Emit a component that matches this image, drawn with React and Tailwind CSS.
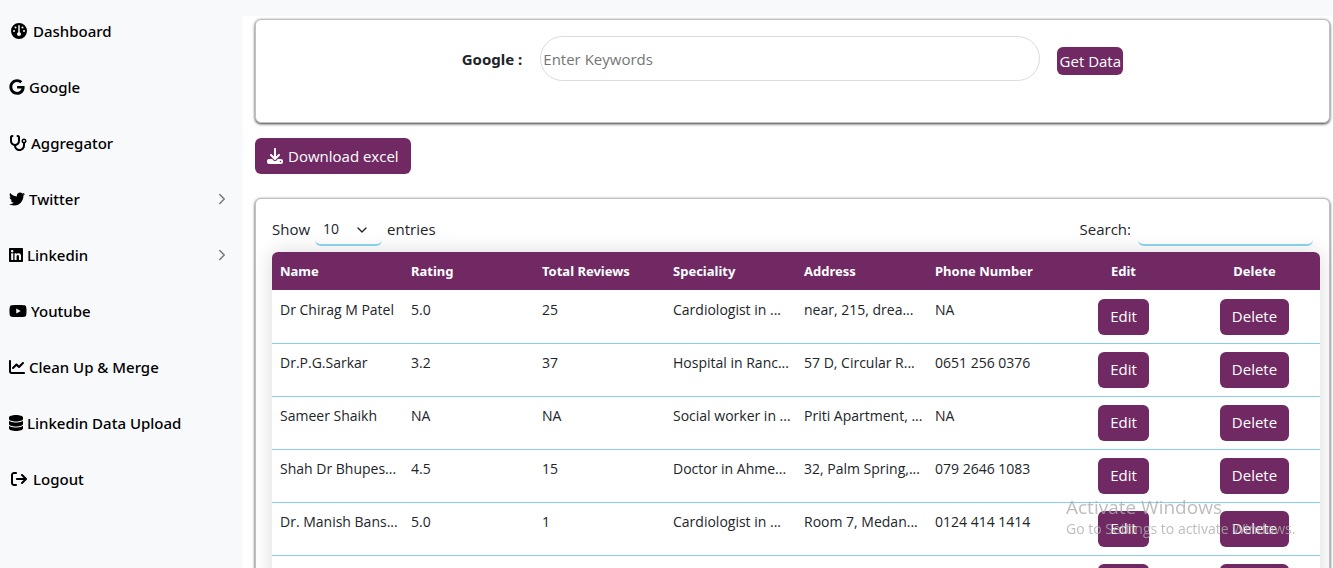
import {
  FaArrowRightFromBracket,
  FaChartLine,
  FaDatabase,
  FaDownload,
  FaGauge,
  FaGoogle,
  FaStethoscope,
  FaTwitter,
  FaYoutube,
} from "react-icons/fa6";
import { FaLinkedin } from "react-icons/fa";
import { ChevronDown, ChevronRight } from "lucide-react";

const links = [
  { label: "Dashboard", icon: FaGauge, size: "size-4", inset: true },
  { label: "Google", icon: FaGoogle, size: "size-4" },
  { label: "Aggregator", icon: FaStethoscope, size: "h-4 w-[18px]" },
  { label: "Twitter", icon: FaTwitter, size: "size-4" },
  { label: "Linkedin", icon: FaLinkedin, size: "h-4 w-[14px]" },
  { label: "Youtube", icon: FaYoutube, size: "h-4 w-[18px]" },
  { label: "Clean Up & Merge", icon: FaChartLine, size: "size-4" },
  { label: "Linkedin Data Upload", icon: FaDatabase, size: "h-4 w-[14px]" },
  { label: "Logout", icon: FaArrowRightFromBracket, size: "size-4", inset: true },
];
const expandable = ["Twitter", "Linkedin"];

const columns = ["Name", "Rating", "Total Reviews", "Speciality", "Address", "Phone Number"];
const rows = [
  ["Dr Chirag M Patel", "5.0", "25", "Cardiologist in ...", "near, 215, drea...", "NA"],
  ["Dr.P.G.Sarkar", "3.2", "37", "Hospital in Ranc...", "57 D, Circular R...", "0651 256 0376"],
  ["Sameer Shaikh", "NA", "NA", "Social worker in ...", "Priti Apartment, ...", "NA"],
  ["Shah Dr Bhupes...", "4.5", "15", "Doctor in Ahme...", "32, Palm Spring,...", "079 2646 1083"],
  ["Dr. Manish Bans...", "5.0", "1", "Cardiologist in ...", "Room 7, Medan...", "0124 414 1414"],
  ["", "", "", "", "", ""],
];

const card =
  "rounded-md border border-[#c0c0c0] bg-white shadow-[0_1px_3px_rgba(0,0,0,0.8)]";
const button = "h-9 rounded-md bg-[#702963] px-3 text-white";

function Sidebar() {
  return (
    <nav className="w-[243px] shrink-0 bg-[#f8f9fb] pt-[3px] font-['Noto_Sans',sans-serif] font-medium text-black">
      <ul>
        {links.map(({ label, icon: Icon, size, inset }) => (
          <li key={label}>
            <a
              href="#"
              className={
                inset
                  ? "flex h-14 items-center gap-1.5 pr-3 pl-[11px]"
                  : "flex h-14 items-center gap-1 pr-3 pl-[9px]"
              }
            >
              <Icon className={size} />
              <span>{label}</span>
              {expandable.includes(label) && (
                <ChevronRight className="ml-auto size-[18px] text-[#777]" />
              )}
            </a>
          </li>
        ))}
      </ul>
    </nav>
  );
}

function SearchPanel() {
  return (
    <form className={`flex h-[104px] items-start justify-center pt-4 ${card}`}>
      <label
        htmlFor="keywords"
        className="mt-3 mr-[18px] font-['Noto_Sans',sans-serif] font-bold text-[#212529]"
      >
        Google :
      </label>
      <input
        id="keywords"
        placeholder="Enter Keywords"
        className="h-[45px] w-[500px] rounded-full border border-[#dbdbdb] px-0.5 placeholder:text-[#757575]"
      />
      <button
        type="button"
        className="mt-[11px] ml-[17px] h-7 w-[66px] rounded-md bg-[#702963] whitespace-nowrap text-white"
      >
        Get Data
      </button>
    </form>
  );
}

function ResultsTable() {
  return (
    <table className="w-full table-fixed border-separate border-spacing-0 rounded-t-md text-left text-sm whitespace-nowrap text-[#212529] shadow-[0_0_20px_rgba(0,0,0,0.15)]">
      <thead className="font-['Noto_Sans',sans-serif]">
        <tr className="h-[38px] text-[13px] text-white">
          {columns.map((name) => (
            <th key={name} className="bg-[#702963] px-2 font-bold first:rounded-tl-md">
              {name}
            </th>
          ))}
          <th className="bg-[#702963] px-2 text-center font-bold">Edit</th>
          <th className="rounded-tr-md bg-[#702963] px-2 text-center font-bold">Delete</th>
        </tr>
      </thead>
      <tbody>
        {rows.map((row, index) => (
          <tr
            key={index}
            className="h-[53px] align-top *:border-t *:border-[#87ceeb] *:bg-white first:*:border-white"
          >
            {row.map((value, column) => (
              <td key={column} className="px-2 pt-[9px]">
                {value}
              </td>
            ))}
            <td className="pt-2 text-center text-[15px]">
              <button type="button" className={button}>
                Edit
              </button>
            </td>
            <td className="pt-2 text-center text-[15px]">
              <button type="button" className={button}>
                Delete
              </button>
            </td>
          </tr>
        ))}
      </tbody>
    </table>
  );
}

export default function App() {
  return (
    <div className="flex h-screen overflow-hidden bg-[#f8f9fb] font-['Open_Sans','Noto_Sans',sans-serif] text-[15px] leading-[22px]">
      <Sidebar />
      <main className="mt-4 min-w-0 grow bg-white pt-[3px] pr-[3px] pl-3">
        <SearchPanel />
        <button type="button" className={`mt-[15px] mb-6 flex items-center gap-[5px] ${button}`}>
          <FaDownload className="size-4" />
          Download excel
        </button>
        <section className={`pt-[15px] pr-[9px] pb-4 pl-4 ${card}`}>
          <div className="flex items-start justify-between pr-[7px] pb-1.5 text-[#212529]">
            <label className="flex items-start gap-[5px]">
              <span className="pt-1">Show</span>
              <span className="relative flex items-center">
                <select className="h-8 w-[67px] appearance-none rounded-md border-b-2 border-[#87ceeb] px-2 text-sm">
                  <option>10</option>
                  <option>25</option>
                </select>
                <ChevronDown className="pointer-events-none absolute right-3 size-4" />
              </span>
              <span className="pt-1">entries</span>
            </label>
            <label className="flex items-start gap-[7px]">
              <span className="pt-1">Search:</span>
              <input
                type="search"
                className="h-8 w-[175px] rounded-md border-b-2 border-[#87ceeb] px-1"
              />
            </label>
          </div>
          <ResultsTable />
        </section>
      </main>
      <aside className="pointer-events-none fixed right-[31px] bottom-[29px] w-[236px] text-[#adadad]/80">
        <p className="text-[19px] leading-6">Activate Windows</p>
        <p className="text-sm">Go to Settings to activate Windows.</p>
      </aside>
    </div>
  );
}
